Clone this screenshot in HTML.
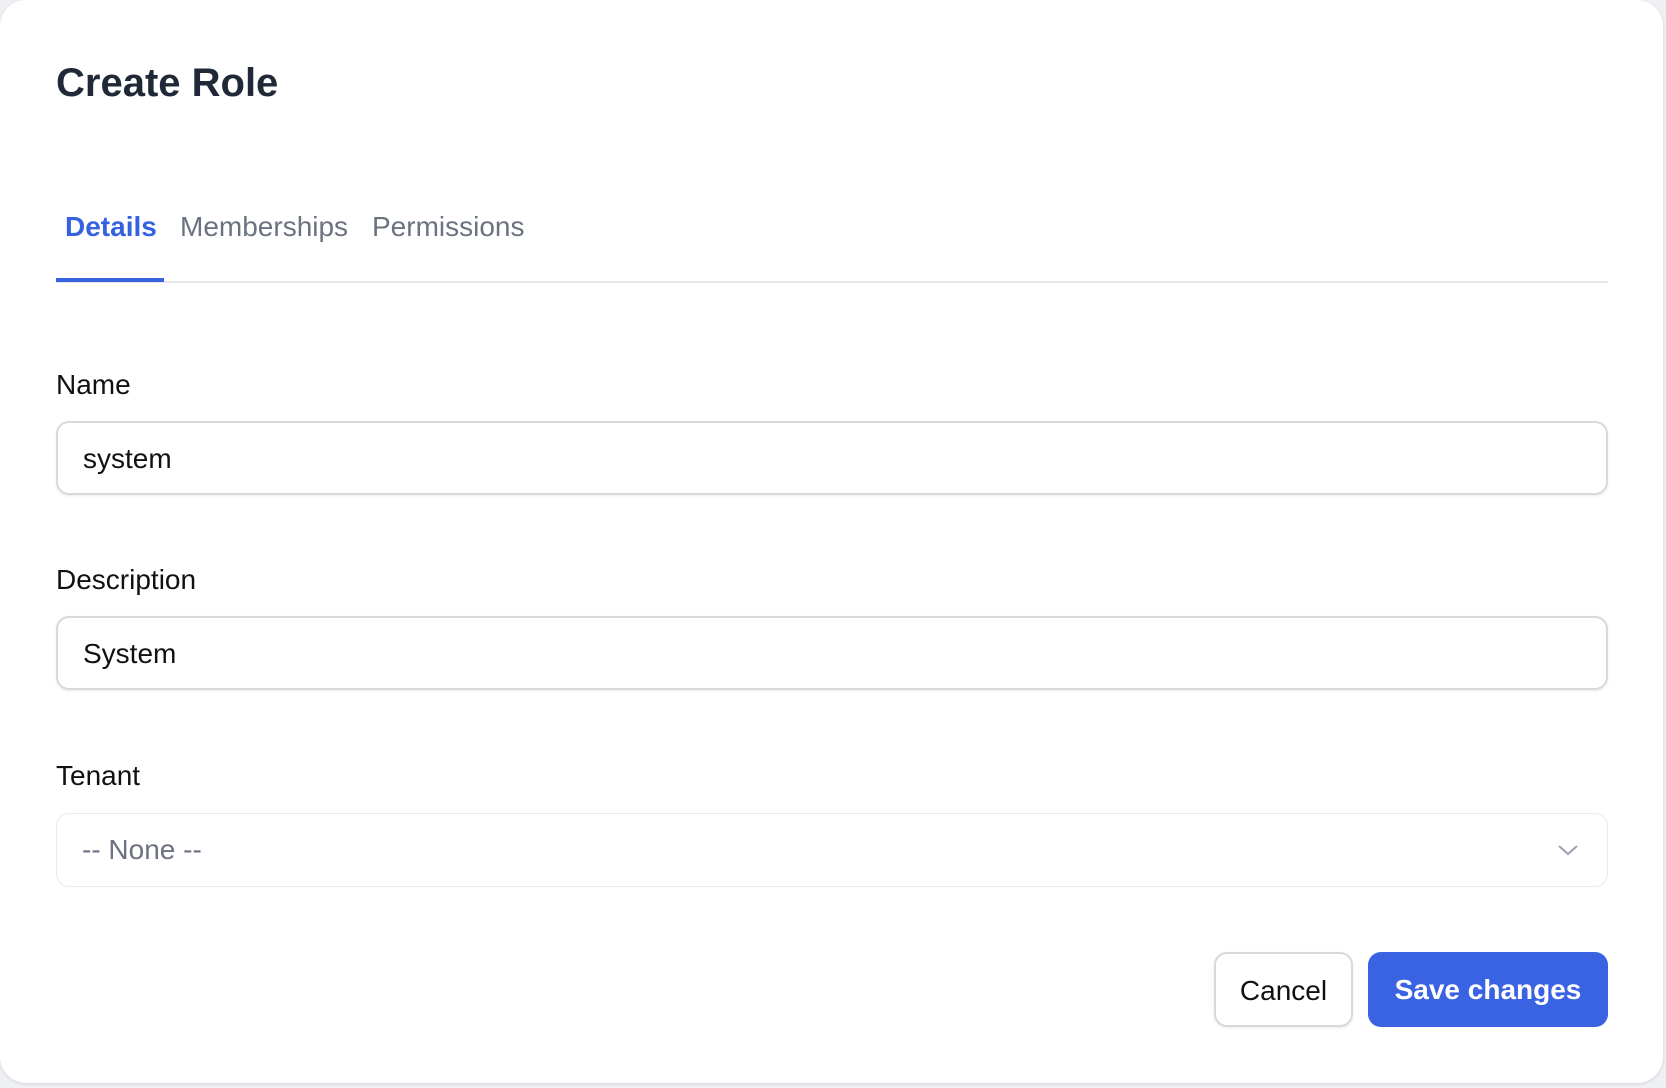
<!DOCTYPE html>
<html><head><style>
html,body{margin:0;padding:0;width:1666px;height:1088px;background:#eef0f3;overflow:hidden;font-family:"Liberation Sans",Helvetica,Arial,sans-serif;}
.card{position:absolute;left:0;top:0;width:1663px;height:1083px;background:#fff;border-radius:26px;box-shadow:0 1px 3px rgba(0,0,0,.12);}
.abs{position:absolute;white-space:nowrap;}
h1{position:absolute;left:56px;top:58px;margin:0;font-size:40px;font-weight:bold;color:#1f2937;line-height:50px;}
.tab{position:absolute;top:210px;font-size:28px;line-height:34px;color:#6b7280;}
.lbl{position:absolute;left:56px;font-size:28px;color:#111;line-height:34px;}
.inp{position:absolute;left:56px;width:1552px;height:74px;border:2px solid #d6d9de;border-radius:13px;box-shadow:0 1px 3px rgba(0,0,0,.08);box-sizing:border-box;font-size:28px;line-height:72px;padding-left:25px;color:#111;}
.btn{position:absolute;top:952px;height:75px;border-radius:13px;box-sizing:border-box;font-size:28px;line-height:73px;text-align:center;}
</style></head><body>
<div class="card">
<h1>Create Role</h1>
<div class="tab" style="left:65px;color:#3563e0;font-weight:bold;">Details</div>
<div class="tab" style="left:180px;">Memberships</div>
<div class="tab" style="left:372px;">Permissions</div>
<div class="abs" style="left:56px;top:281px;width:1552px;height:2px;background:#e5e7eb;"></div>
<div class="abs" style="left:56px;top:278px;width:108px;height:4px;background:#3563e0;"></div>

<div class="lbl" style="top:368px;">Name</div>
<div class="inp" style="top:421px;">system</div>
<div class="lbl" style="top:563px;">Description</div>
<div class="inp" style="top:616px;">System</div>
<div class="lbl" style="top:759px;">Tenant</div>
<div class="inp" style="top:813px;border:1.5px solid #e8eaed;box-shadow:none;color:#6b7280;">-- None --
<svg style="position:absolute;right:28px;top:29px" width="22" height="14" viewBox="0 0 22 14"><path d="M2 3 L11 11 L20 3" fill="none" stroke="#9ca3af" stroke-width="2"/></svg></div>

<div class="btn" style="left:1214px;width:139px;border:2px solid #d6d9de;color:#111;box-shadow:0 1px 3px rgba(0,0,0,.08);">Cancel</div>
<div class="btn" style="left:1368px;width:240px;background:#3a63e3;color:#fff;font-weight:bold;line-height:75px;">Save changes</div>
</div>
</body></html>
